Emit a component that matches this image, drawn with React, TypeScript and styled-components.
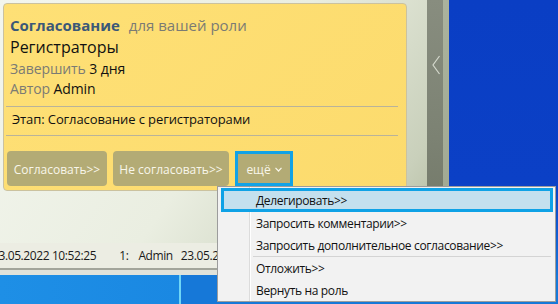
import styled, { createGlobalStyle } from "styled-components";

const GlobalStyle = createGlobalStyle`
  html, body {
    margin: 0;
    padding: 0;
    width: 558px;
    height: 304px;
    overflow: hidden;
  }
  body {
    font-family: "Open Sans", "Noto Sans", sans-serif;
  }
`;

const menuItems = [
  { label: "Делегировать>>", active: true },
  { label: "Запросить комментарии>>" },
  { label: "Запросить дополнительное согласование>>", separatorAfter: true },
  { label: "Отложить>>" },
  { label: "Вернуть на роль" },
];

const App = () => {
  return (
    <>
      <GlobalStyle />
      <Desktop>
        <Window>
          <MainPane>
            <Card>
              <TitleRow>
                <Title>Согласование</Title>
                <Muted>для вашей роли</Muted>
              </TitleRow>
              <RoleRow>Регистраторы</RoleRow>
              <InfoRow>
                <Muted>Завершить</Muted> 3 дня
              </InfoRow>
              <InfoRow $tight>
                <Muted>Автор</Muted> Admin
              </InfoRow>
              <Divider />
              <StageRow>Этап: Согласование с регистраторами</StageRow>
              <Divider $flush />
              <Buttons>
                <ActionButton $width={100}>Согласовать&gt;&gt;</ActionButton>
                <ActionButton $width={116}>Не согласовать&gt;&gt;</ActionButton>
                <ActionButton $width={58} $focused>
                  ещё
                  <svg width="7" height="5" viewBox="0 0 7 5">
                    <polyline
                      points="0.5,0.8 3.5,4 6.5,0.8"
                      fill="none"
                      stroke="#f8f6ea"
                      strokeWidth="1.2"
                    />
                  </svg>
                </ActionButton>
              </Buttons>
            </Card>
            <StatusBar>
              <StatusText>23.05.2022 10:52:25</StatusText>
              <StatusText $gap={23}>1:</StatusText>
              <StatusText $gap={10}>Admin</StatusText>
              <StatusText $gap={8}>23.05.2022</StatusText>
            </StatusBar>
          </MainPane>
          <Collapser>
            <svg width="10" height="20" viewBox="0 0 10 20">
              <polyline
                points="8.5,1 2,10 8.5,19"
                fill="none"
                stroke="#d4d8cc"
                strokeWidth="1.2"
              />
            </svg>
          </Collapser>
          <Edge />
        </Window>
        <Menu>
          {menuItems.map((item) => (
            <div key={item.label}>
              <MenuItem $active={item.active}>{item.label}</MenuItem>
              {item.separatorAfter && <MenuSeparator />}
            </div>
          ))}
        </Menu>
      </Desktop>
    </>
  );
};

const Desktop = styled.div`
  position: relative;
  width: 558px;
  height: 304px;
  background:
    linear-gradient(90deg, #1e8fe6 0, #1a88e2 179px, #6fd6f6 179px, #6fd6f6 181px, #1678d8 181px) 0 275px / 100% 29px no-repeat,
    linear-gradient(180deg, #0a3ec4 0%, #0b40c6 60%, #1a84de 100%);
  overflow: hidden;
`;

const Window = styled.div`
  display: flex;
  width: 449px;
  height: 275px;
  background: #dde0d6;
`;

const MainPane = styled.div`
  width: 427px;
  display: flex;
  flex-direction: column;
  background: linear-gradient(125deg, #f3f6ee 0%, #eaeee1 50%, #c9d0bb 85%, #aeb69a 100%);
`;

const Card = styled.div`
  box-sizing: border-box;
  width: 404px;
  height: 188px;
  margin: 3px 0 0 3px;
  padding: 8px 8px 0 6px;
  border: 1px solid #cbc29f;
  border-radius: 4px;
  background: linear-gradient(135deg, #fee076 0%, #fcdb6d 100%);
  color: #111;
`;

const TitleRow = styled.div`
  display: flex;
  gap: 9px;
  padding-top: 3px;
  font-size: 15px;
  line-height: 20px;
  white-space: nowrap;
`;

const Title = styled.span`
  font-weight: 700;
  color: #3b5878;
`;

const Muted = styled.span`
  color: #7b7b74;
`;

const RoleRow = styled.div`
  font-size: 16px;
  line-height: 24px;
`;

const InfoRow = styled.div<{ $tight?: boolean }>`
  font-size: 14px;
  letter-spacing: -0.1px;
  line-height: ${({ $tight }) => ($tight ? "19px" : "20px")};
`;

const Divider = styled.div<{ $flush?: boolean }>`
  height: 1px;
  margin: ${({ $flush }) => ($flush ? "0" : "8px")} 0 0 -4px;
  background: #b9b39a;
`;

const StageRow = styled.div`
  font-size: 13px;
  letter-spacing: -0.1px;
  line-height: 24px;
  padding: 0 0 4px 2px;
`;

const Buttons = styled.div`
  display: flex;
  gap: 5px;
  margin: 15px 0 0 -3px;
`;

const ActionButton = styled.div<{ $width: number; $focused?: boolean }>`
  box-sizing: border-box;
  width: ${({ $width }) => $width}px;
  height: 35px;
  display: flex;
  align-items: center;
  justify-content: center;
  gap: 4px;
  padding-top: 1px;
  border-radius: ${({ $focused }) => ($focused ? "0" : "4px")};
  border: ${({ $focused }) => ($focused ? "3px solid #12a2e6" : "none")};
  background: #b3ab75;
  color: #f8f6ea;
  font-size: 12px;
  white-space: nowrap;
  & + & {
    margin-left: 1px;
  }
`;

const StatusBar = styled.div`
  margin-top: auto;
  height: 25px;
  display: flex;
  align-items: center;
  background: #ecede3;
  border-bottom: 2px solid #a3a59b;
  margin-bottom: 5px;
  box-shadow: 0 5px 0 #e0e2da;
  overflow: hidden;
  white-space: nowrap;
`;

const StatusText = styled.span<{ $gap?: number }>`
  font-size: 12px;
  letter-spacing: -0.4px;
  color: #1a1a1a;
  margin-left: ${({ $gap }) => ($gap ? `${$gap}px` : "-8px")};
`;

const Collapser = styled.div`
  width: 16px;
  display: flex;
  justify-content: center;
  padding-top: 55px;
  background: linear-gradient(180deg, #888d7f 0%, #7c8273 50%, #6d7362 100%);
  svg {
    margin-left: 1px;
  }
`;

const Edge = styled.div`
  width: 6px;
  background: linear-gradient(180deg, #aab29d 0%, #9ea690 100%);
`;

const Menu = styled.div`
  position: absolute;
  left: 217px;
  top: 186px;
  box-sizing: border-box;
  width: 339px;
  height: 116px;
  padding: 2px 2px 2px 3px;
  border: 1px solid #9c9c9c;
  background:
    linear-gradient(90deg, transparent 31px, #dcdcdc 31px, #dcdcdc 32px, #ffffff 32px, #ffffff 33px, transparent 33px),
    #f2f2f2;
`;

const MenuItem = styled.div<{ $active?: boolean }>`
  box-sizing: border-box;
  height: 22px;
  display: flex;
  align-items: center;
  padding-left: 35px;
  font-size: 12px;
  letter-spacing: -0.35px;
  color: #111;
  white-space: nowrap;
  ${({ $active }) =>
    $active &&
    `
    height: 24px;
    margin-top: -1px;
    padding-left: 32px;
    border: 3px solid #0fa2e6;
    background: #c4e0ee;
  `}
`;

const MenuSeparator = styled.div`
  height: 1px;
  margin: 0 2px 0 32px;
  background: #d4d4d4;
`;

export default App;
